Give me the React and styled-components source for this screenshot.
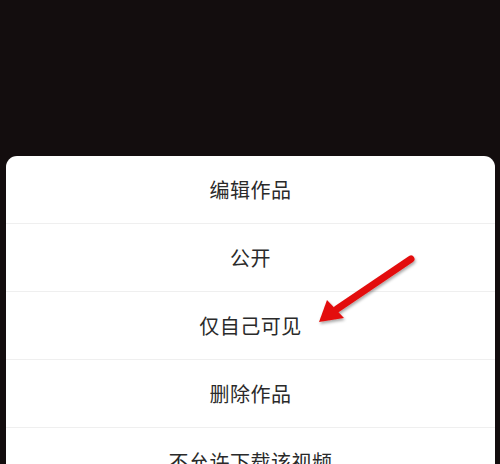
import styled, { createGlobalStyle } from "styled-components"

const GlobalStyle = createGlobalStyle`
  html, body {
    margin: 0;
    padding: 0;
    background: #130d0e;
  }
  body {
    font-family: "Noto Sans CJK SC", "Noto Sans", sans-serif;
  }
`

const actions = ["编辑作品", "公开", "仅自己可见", "删除作品", "不允许下载该视频"]

export default function App() {
  return (
    <Screen>
      <GlobalStyle />
      <Sheet>
        {actions.map((label) => (
          <ActionRow key={label}>{label}</ActionRow>
        ))}
      </Sheet>
      <Arrow viewBox="0 0 500 464">
        <defs>
          <filter id="shade" x="-20%" y="-20%" width="140%" height="140%">
            <feDropShadow dx="1" dy="2" stdDeviation="1.5" floodColor="#000" floodOpacity="0.35" />
          </filter>
        </defs>
        <g filter="url(#shade)">
          <line x1="411" y1="259" x2="337" y2="309" stroke="#e3100f" strokeWidth="7" strokeLinecap="round" />
          <polygon points="319,322 327,300 344,318" fill="#e3100f" />
        </g>
      </Arrow>
    </Screen>
  )
}

const Screen = styled.div`
  position: relative;
  width: 500px;
  height: 464px;
  overflow: hidden;
  background: #130d0e;
  padding: 156px 5px 0 6px;
  box-sizing: border-box;
`

const Sheet = styled.div`
  background: #ffffff;
  border-radius: 11px 11px 0 0;
  overflow: hidden;
`

const ActionRow = styled.div`
  height: 67px;
  border-bottom: 1px solid #efefef;
  display: flex;
  align-items: center;
  justify-content: center;
  font-size: 20px;
  color: #2a2a2a;
  letter-spacing: 0.5px;
`

const Arrow = styled.svg`
  position: absolute;
  left: 0;
  top: 0;
  width: 500px;
  height: 464px;
  pointer-events: none;
`
